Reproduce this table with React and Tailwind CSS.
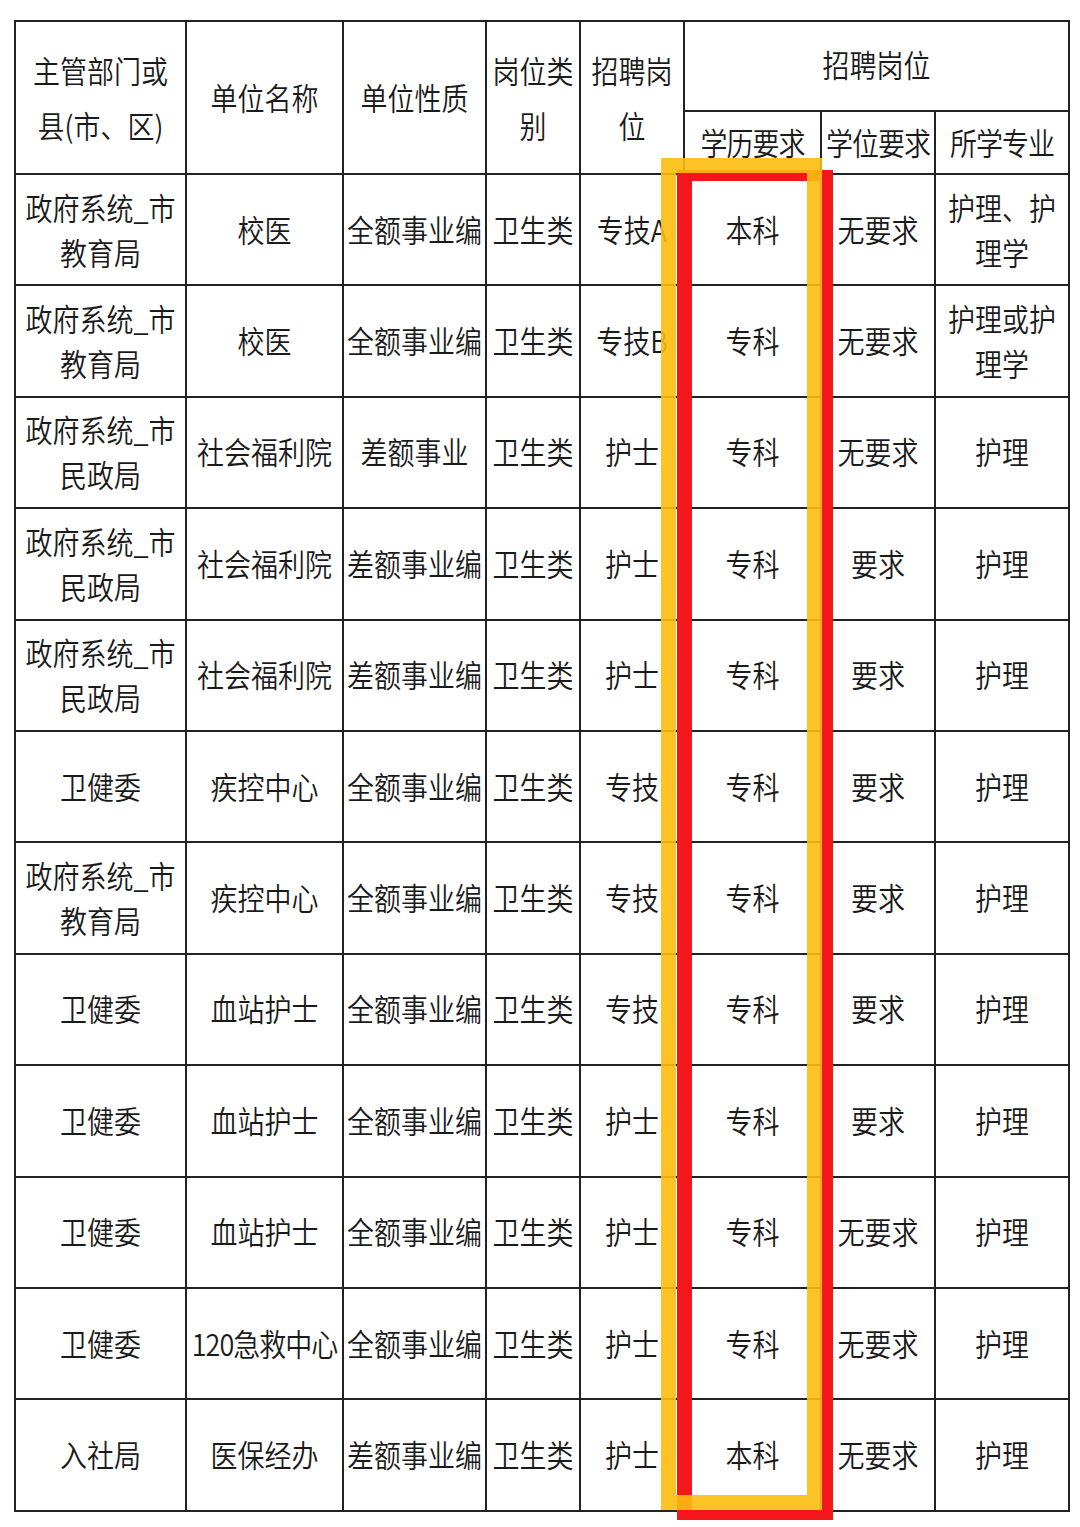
import React from "react";

const rows = [
  ["政府系统_市\n教育局", "校医", "全额事业编", "卫生类", "专技A", "本科", "无要求", "护理、护\n理学"],
  ["政府系统_市\n教育局", "校医", "全额事业编", "卫生类", "专技B", "专科", "无要求", "护理或护\n理学"],
  ["政府系统_市\n民政局", "社会福利院", "差额事业", "卫生类", "护士", "专科", "无要求", "护理"],
  ["政府系统_市\n民政局", "社会福利院", "差额事业编", "卫生类", "护士", "专科", "要求", "护理"],
  ["政府系统_市\n民政局", "社会福利院", "差额事业编", "卫生类", "护士", "专科", "要求", "护理"],
  ["卫健委", "疾控中心", "全额事业编", "卫生类", "专技", "专科", "要求", "护理"],
  ["政府系统_市\n教育局", "疾控中心", "全额事业编", "卫生类", "专技", "专科", "要求", "护理"],
  ["卫健委", "血站护士", "全额事业编", "卫生类", "专技", "专科", "要求", "护理"],
  ["卫健委", "血站护士", "全额事业编", "卫生类", "护士", "专科", "要求", "护理"],
  ["卫健委", "血站护士", "全额事业编", "卫生类", "护士", "专科", "无要求", "护理"],
  ["卫健委", "120急救中心", "全额事业编", "卫生类", "护士", "专科", "无要求", "护理"],
  ["入社局", "医保经办", "差额事业编", "卫生类", "护士", "本科", "无要求", "护理"],
];

const cell =
  "border-2 border-[#222] p-0 text-center align-middle overflow-hidden";

function T({ children, tight }) {
  return (
    <span
      className={`inline-block scale-y-[1.12] ${
        tight ? "whitespace-nowrap tracking-[-1px]" : "whitespace-pre-line"
      }`}
    >
      {children}
    </span>
  );
}

export default function App() {
  return (
    <div
      className="relative w-[1080px] h-[1527px] bg-white text-[#1a1a1a] overflow-hidden"
      style={{ fontFamily: '"Noto Sans CJK SC", "Noto Sans", sans-serif' }}
    >
      <div className="pt-[20px] pl-[14px]">
        <table className="table-fixed border-collapse w-[1054px] text-[27px] font-[350]">
          <colgroup>
            <col className="w-[171px]" />
            <col className="w-[157px]" />
            <col className="w-[143px]" />
            <col className="w-[94px]" />
            <col className="w-[104px]" />
            <col className="w-[137px]" />
            <col className="w-[114px]" />
            <col className="w-[134px]" />
          </colgroup>
          <thead>
            <tr className="h-[90px] leading-[49px]">
              <td rowSpan={2} className={cell}><T>{"主管部门或\n县(市、区)"}</T></td>
              <td rowSpan={2} className={cell}><T>单位名称</T></td>
              <td rowSpan={2} className={cell}><T>单位性质</T></td>
              <td rowSpan={2} className={cell}><T>{"岗位类\n别"}</T></td>
              <td rowSpan={2} className={cell}><T>{"招聘岗\n位"}</T></td>
              <td colSpan={3} className={`${cell} pb-[4px]`}><T>招聘岗位</T></td>
            </tr>
            <tr className="h-[63px] leading-[40px]">
              <td className={cell}><T tight>学历要求</T></td>
              <td className={cell}><T tight>学位要求</T></td>
              <td className={cell}><T tight>所学专业</T></td>
            </tr>
          </thead>
          <tbody>
            {rows.map((r, i) => (
              <tr key={i} className="h-[111.4px] leading-[40px]">
                {r.map((c, j) => (
                  <td key={j} className={cell}>
                    <T tight={j === 1 && c.startsWith("120")}>{c}</T>
                  </td>
                ))}
              </tr>
            ))}
          </tbody>
        </table>
      </div>

      {/* red highlight box */}
      <div className="absolute left-[677px] top-[170px] w-[156px] h-[1350px] border-solid border-[#f5161b] border-l-[15px] border-t-[11px] border-r-[12px] border-b-[10px]" />
      {/* yellow highlight box */}
      <div className="absolute left-[661px] top-[158px] w-[161px] h-[1352px] border-[15px] border-solid border-[#fcbd10] opacity-90" />
    </div>
  );
}
